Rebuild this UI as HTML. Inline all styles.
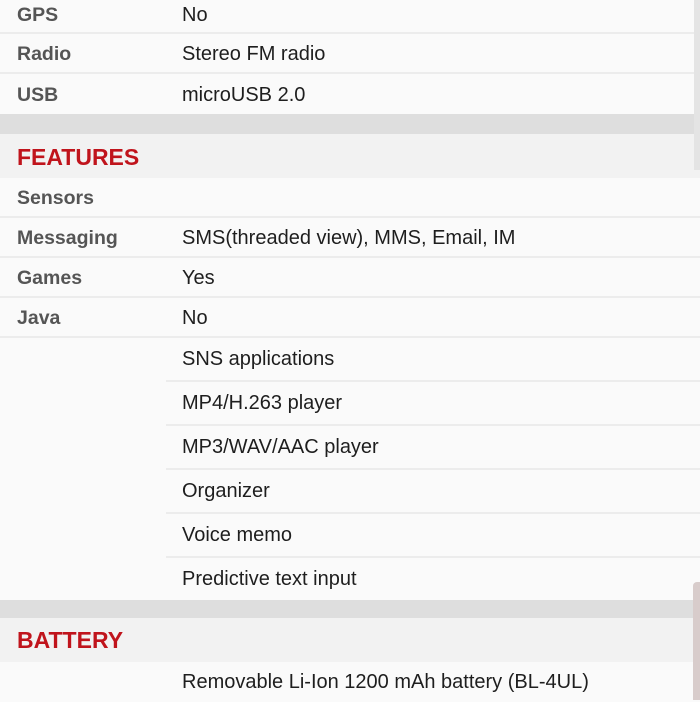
<html><head><style>
body{margin:0;width:700px;height:700px;overflow:hidden;background:#fafafa;font-family:"Liberation Sans",sans-serif;position:relative}
.r{position:absolute;left:0;width:700px;border-bottom:2px solid #ececec;box-sizing:border-box;font-size:20px;color:#1e1e1e}
.l{position:absolute;left:17px;color:#555;font-weight:bold;font-size:19.5px}
.v{position:absolute;left:182px}
.band{position:absolute;left:0;width:700px;background:#dedede}
.h{position:absolute;left:0;width:700px;background:#f2f2f2;color:#c0141c;font-weight:bold;font-size:23px}
.h span{position:absolute;left:17px}
</style></head><body>
<div class="r" style="top:-6px;height:40px"><span class="l" style="top:10px">GPS</span><span class="v" style="top:10px">No</span></div>
<div class="r" style="top:34px;height:40px"><span class="l" style="top:9px">Radio</span><span class="v" style="top:9px">Stereo FM radio</span></div>
<div class="r" style="top:74px;height:40px;border:none"><span class="l" style="top:10px">USB</span><span class="v" style="top:10px">microUSB 2.0</span></div>
<div class="band" style="top:114px;height:20px"></div>
<div class="h" style="top:134px;height:44px"><span style="top:10px">FEATURES</span></div>
<div class="r" style="top:178px;height:40px"><span class="l" style="top:9px">Sensors</span></div>
<div class="r" style="top:218px;height:40px"><span class="l" style="top:9px">Messaging</span><span class="v" style="top:9px">SMS(threaded view), MMS, Email, IM</span></div>
<div class="r" style="top:258px;height:40px"><span class="l" style="top:9px">Games</span><span class="v" style="top:9px">Yes</span></div>
<div class="r" style="top:298px;height:40px"><span class="l" style="top:9px">Java</span><span class="v" style="top:9px">No</span></div>
<div class="r" style="top:338px;height:44px;left:166px"><span class="v" style="left:16px;top:10px">SNS applications</span></div>
<div class="r" style="top:382px;height:44px;left:166px"><span class="v" style="left:16px;top:10px">MP4/H.263 player</span></div>
<div class="r" style="top:426px;height:44px;left:166px"><span class="v" style="left:16px;top:10px">MP3/WAV/AAC player</span></div>
<div class="r" style="top:470px;height:44px;left:166px"><span class="v" style="left:16px;top:10px">Organizer</span></div>
<div class="r" style="top:514px;height:44px;left:166px"><span class="v" style="left:16px;top:10px">Voice memo</span></div>
<div class="r" style="top:558px;height:42px;left:166px;border:none"><span class="v" style="left:16px;top:10px">Predictive text input</span></div>
<div class="band" style="top:600px;height:18px"></div>
<div class="h" style="top:618px;height:44px"><span style="top:9px">BATTERY</span></div>
<div class="r" style="top:662px;height:40px;left:166px;border:none"><span class="v" style="left:16px;top:9px">Removable Li-Ion 1200 mAh battery (BL-4UL)</span></div>
<div style="position:absolute;left:694px;top:0;width:6px;height:170px;background:#e4e4e4"></div>
<div style="position:absolute;left:693px;top:582px;width:7px;height:118px;background:#d8cccb;border-radius:4px 0 0 0"></div>
</body></html>
